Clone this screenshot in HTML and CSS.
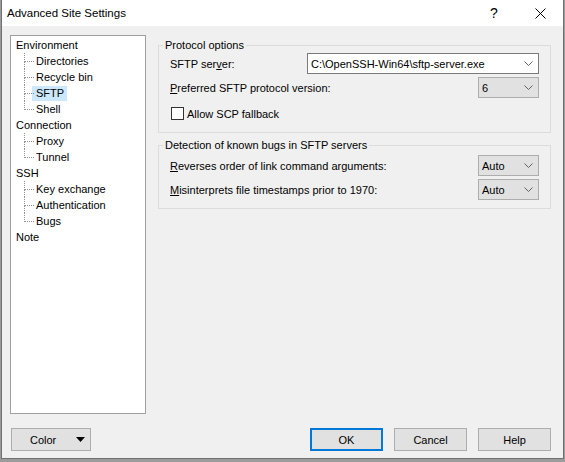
FILE: index.html
```html
<!DOCTYPE html>
<html>
<head>
<meta charset="utf-8">
<link rel="stylesheet" href="styles.css">
</head>
<body>
<div class="window">
  <div class="titlebar">
    <span class="title">Advanced Site Settings</span>
    <span class="cap help">?</span>
    <span class="cap close"><svg width="11" height="11" viewBox="0 0 11 11"><path d="M0.5 0.5 L10.5 10.5 M10.5 0.5 L0.5 10.5" stroke="#000" stroke-width="1" fill="none"/></svg></span>
  </div>
  <div class="content">
    <div class="main">
      <div class="tree">
        <div class="node">Environment</div>
        <ul class="kids">
          <li><span>Directories</span></li>
          <li><span>Recycle bin</span></li>
          <li class="sel"><span>SFTP</span></li>
          <li><span>Shell</span></li>
        </ul>
        <div class="node">Connection</div>
        <ul class="kids">
          <li><span>Proxy</span></li>
          <li><span>Tunnel</span></li>
        </ul>
        <div class="node">SSH</div>
        <ul class="kids">
          <li><span>Key exchange</span></li>
          <li><span>Authentication</span></li>
          <li><span>Bugs</span></li>
        </ul>
        <div class="node">Note</div>
      </div>
      <div class="pages">
        <fieldset class="group g1">
          <legend>Protocol options</legend>
          <div class="row">
            <span>SFTP ser<u>v</u>er:</span>
            <div class="combo edit"><span>C:\OpenSSH-Win64\sftp-server.exe</span><svg width="9" height="5" viewBox="0 0 9 5"><path d="M0.5 0.5 L4.5 4.5 L8.5 0.5" stroke="#606060" fill="none"/></svg></div>
          </div>
          <div class="row">
            <span><u>P</u>referred SFTP protocol version:</span>
            <div class="combo small"><span>6</span><svg width="9" height="5" viewBox="0 0 9 5"><path d="M0.5 0.5 L4.5 4.5 L8.5 0.5" stroke="#606060" fill="none"/></svg></div>
          </div>
          <div class="checkrow">
            <span class="check"></span><span>Allow SCP fallback</span>
          </div>
        </fieldset>
        <fieldset class="group g2">
          <legend>Detection of known bugs in SFTP servers</legend>
          <div class="row">
            <span><u>R</u>everses order of link command arguments:</span>
            <div class="combo small"><span>Auto</span><svg width="9" height="5" viewBox="0 0 9 5"><path d="M0.5 0.5 L4.5 4.5 L8.5 0.5" stroke="#606060" fill="none"/></svg></div>
          </div>
          <div class="row">
            <span><u>M</u>isinterprets file timestamps prior to 1970:</span>
            <div class="combo small"><span>Auto</span><svg width="9" height="5" viewBox="0 0 9 5"><path d="M0.5 0.5 L4.5 4.5 L8.5 0.5" stroke="#606060" fill="none"/></svg></div>
          </div>
        </fieldset>
      </div>
    </div>
    <div class="buttons">
      <div class="btn color"><span>Color</span><svg width="9" height="5" viewBox="0 0 9 5"><path d="M0 0 L9 0 L4.5 5 Z" fill="#000"/></svg></div>
      <div class="btn-group">
        <div class="btn ok">OK</div>
        <div class="btn">Cancel</div>
        <div class="btn">Help</div>
      </div>
    </div>
  </div>
</div>
</body>
</html>
```
FILE: styles.css
```css
* { box-sizing: border-box; }
html, body { margin: 0; padding: 0; }
body {
  width: 565px;
  height: 462px;
  overflow: hidden;
  background: #9c9c9c;
  font-family: "Liberation Sans", Arial, sans-serif;
  font-size: 11px;
  color: #000;
}
.window {
  margin-left: 1px;
  width: 563px;
  height: 459px;
  border: 1px solid #707070;
  border-top: 0;
  background: #f0f0f0;
  display: flex;
  flex-direction: column;
}
.titlebar {
  height: 26px;
  flex: none;
  background: #fff;
  display: flex;
  align-items: center;
}
.title {
  flex: 1;
  padding-left: 5px;
  font-size: 11.5px;
}
.cap {
  width: 46px;
  height: 26px;
  display: flex;
  align-items: center;
  justify-content: center;
}
.help { font-size: 14px; }
.content {
  flex: 1;
  padding: 9px 12px 7px 8px;
  display: flex;
  flex-direction: column;
}
.main {
  display: flex;
  gap: 12px;
  height: 379px;
}
.tree {
  width: 136px;
  flex: none;
  border: 1px solid #a0a0a0;
  background: #fff;
  padding: 1px 0 0 5px;
  line-height: 16px;
}
.node { height: 16px; }
.kids { list-style: none; margin: 0; padding: 0; }
.kids li {
  position: relative;
  height: 16px;
  padding-left: 16px;
}
.kids li::before {
  content: "";
  position: absolute;
  left: 8px;
  top: 0;
  width: 9px;
  height: 8px;
  border-left: 1px dotted #909090;
  border-bottom: 1px dotted #909090;
}
.kids li:not(:last-child)::after {
  content: "";
  position: absolute;
  left: 8px;
  top: 8px;
  bottom: 0;
  border-left: 1px dotted #909090;
}
.kids li span {
  display: inline-block;
  padding: 0 3px 0 4px;
  line-height: 15px;
}
.kids li.sel span { background: #cce8ff; }
.pages {
  width: 393px;
  flex: none;
  display: flex;
  flex-direction: column;
}
.group {
  margin: 2px 0 0;
  padding: 0 11px 12px 0;
  border: 1px solid #dcdcdc;
  min-width: 0;
}
.group legend {
  margin-left: 4px;
  padding: 0 2px;
  line-height: 16px;
}
.g2 { margin-top: 4px; padding-bottom: 8px; }
.row {
  display: flex;
  align-items: center;
  justify-content: space-between;
  height: 21px;
  padding-left: 11px;
}
.row + .row { margin-top: 3px; }
.g2 .row:first-of-type { margin-top: 2px; }
.checkrow {
  display: flex;
  align-items: center;
  height: 13px;
  margin-top: 9px;
  padding-left: 12px;
}
.check {
  width: 13px;
  height: 13px;
  border: 1px solid #333;
  background: #fff;
  margin-right: 3px;
}
.combo {
  height: 21px;
  border: 1px solid #adadad;
  background: #e1e1e1;
  display: flex;
  align-items: center;
  justify-content: space-between;
  padding: 0 5px 0 3px;
}
.combo.edit {
  width: 232px;
  background: #fff;
  border-color: #7a7a7a;
}
.combo.small { width: 61px; }
.buttons {
  margin-top: 14px;
  height: 23px;
  display: flex;
  justify-content: space-between;
}
.btn {
  height: 23px;
  width: 73px;
  border: 1px solid #adadad;
  background: #e1e1e1;
  display: flex;
  align-items: center;
  justify-content: center;
}
.btn.ok { border: 2px solid #0078d7; }
.btn.color {
  width: 80px;
  margin-left: 1px;
  justify-content: space-between;
  padding: 0 5px 0 18px;
}
.btn-group {
  display: flex;
  gap: 11px;
}
```
